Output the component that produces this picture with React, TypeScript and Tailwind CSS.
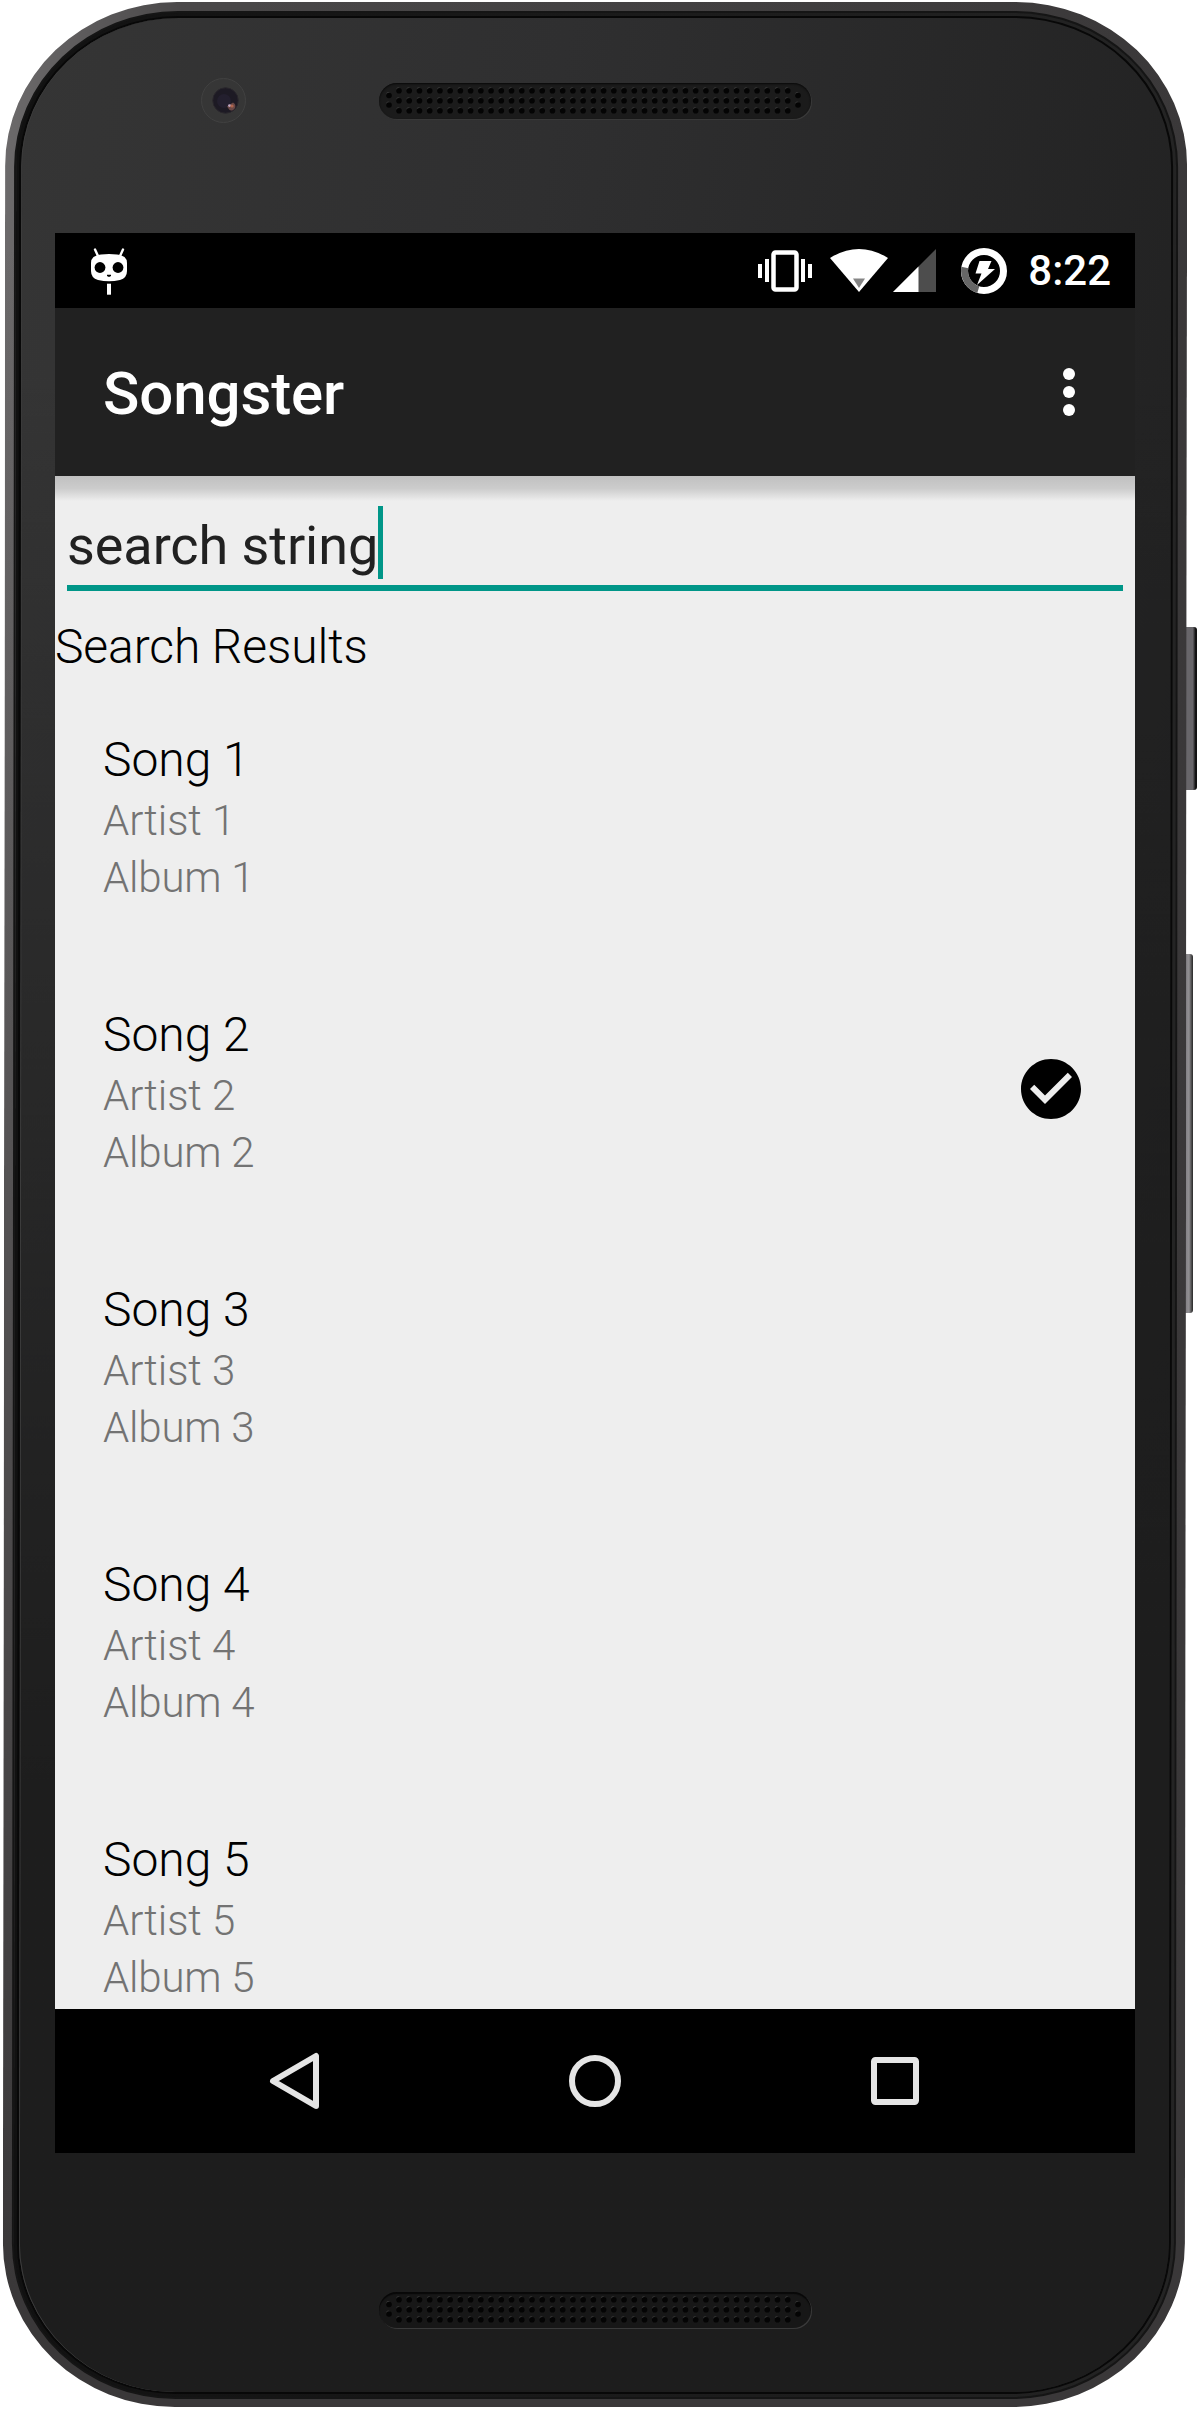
import React from "react";

const songs = [1, 2, 3, 4, 5];
const selectedSong = 2;
const columns = Array.from({ length: 39 }, (_, i) => 20 + i * 10.23);

function Hole({ x, y }: { x: number; y: number }) {
  return (
    <g>
      <circle cx={x - 0.9} cy={y - 1.6} r="1.8" fill="#3b3b3b" />
      <circle cx={x} cy={y} r="2.8" fill="#040404" />
    </g>
  );
}

function Speaker({ bottom = false }: { bottom?: boolean }) {
  return (
    <div
      className={
        bottom
          ? "h-9 w-[432px] rounded-full bg-[#171717] shadow-[inset_0_2px_1px_#080808,1px_1px_0_#3a3a3a]"
          : "h-9 w-[432px] rounded-full bg-[#1b1b1b] shadow-[inset_0_1px_2px_#080808,1px_1px_0_#393939]"
      }
    >
      <svg width="432" height="36" viewBox="0 0 432 36">
        {columns.map((x) => (
          <g key={x}>
            <Hole x={x} y={7.7} />
            <Hole x={x} y={17.7} />
            <Hole x={x} y={27.7} />
          </g>
        ))}
        <Hole x={10} y={12.5} />
        <Hole x={10} y={22} />
        <Hole x={419} y={12.5} />
        <Hole x={419} y={22} />
      </svg>
    </div>
  );
}

function Camera() {
  return (
    <div className="flex size-[45px] items-center justify-center rounded-full border border-[#414141] bg-[#363636]">
      <svg width="27" height="27" viewBox="0 0 27 27" className="ml-[3px]">
        <circle cx="13.5" cy="13.5" r="12.7" fill="#1d1a24" stroke="#29262c" />
        <circle cx="12" cy="14" r="7" fill="#231f2e" />
        <path d="M15 19.5 21 15.5a4 4 0 0 1-3.5 7.5z" fill="#6b4846" />
        <circle cx="17.5" cy="18.6" r="1.4" fill="#c4a9c4" />
        <circle cx="20" cy="19" r="1.6" fill="#b0654e" />
      </svg>
    </div>
  );
}

function StatusBar() {
  return (
    <div className="flex h-[75px] shrink-0 items-center bg-black pr-6 pl-9">
      <svg width="36" height="48" viewBox="0 0 36 48">
        <path d="M4 2.5 7 9M32 2.5 29 9" stroke="#fff" strokeWidth="2.4" strokeLinecap="round" />
        <path
          d="M10 7.6Q18 6.6 26 7.6Q36 8.6 36 16V24Q36 31 29 33Q18 35.6 7 33Q0 31 0 24V16Q0 8.6 10 7.6Z"
          fill="#fff"
        />
        <circle cx="9" cy="20.5" r="5.4" />
        <circle cx="27" cy="20.5" r="5.4" />
        <path d="M16 27.7h4v1l-1 1h-2l-1-1z" />
        <path d="M16 36.7h4v11h-4z" fill="#fff" />
      </svg>
      <svg width="54" height="42" viewBox="0 0 54 42" className="ml-auto">
        <rect x="15.5" y="2.5" width="23" height="37" rx="2" fill="none" stroke="#fff" strokeWidth="4.5" />
        <path d="M0 14h4v14H0zM7 9h4v23H7zM43 9h4v23h-4zM50 14h4v14h-4z" fill="#fff" />
      </svg>
      <svg width="58" height="43" viewBox="0 0 58 43" className="ml-[18px]">
        <path d="M0 9Q29-9 58 9L29 43Z" fill="#fff" />
        <path d="M23 29.5H35L29 39Z" fill="#858585" />
      </svg>
      <svg width="43" height="43" viewBox="0 0 43 43" className="ml-[5px]">
        <path d="M43 0V43H0Z" fill="#4d4d4d" />
        <path d="M25.5 17.5V43H0Z" fill="#fff" />
      </svg>
      <svg width="46" height="46" viewBox="0 0 46 46" className="ml-[25px]">
        <circle cx="23" cy="23" r="19.5" fill="none" stroke="#fff" strokeWidth="7" />
        <path d="M17.3 41.7A19.5 19.5 0 0 1 3.9 19.5" fill="none" stroke="#666" strokeWidth="7" />
        <path d="M18.5 13H30.5L27 21H34L16 37L20.5 25.5H14.5Z" fill="#fff" />
      </svg>
      <span className="ml-[21px] text-[42px] leading-[49px] font-medium text-white">8:22</span>
    </div>
  );
}

function AppBar() {
  return (
    <div className="flex h-[168px] shrink-0 items-center justify-between bg-[#212121] pr-[60px] pl-12 text-white">
      <h1 className="pt-1 text-[60px] leading-[70px] font-medium tracking-[-0.1px]">Songster</h1>
      <svg width="12" height="48" viewBox="0 0 12 48" fill="#fff">
        <circle cx="6" cy="6" r="6" />
        <circle cx="6" cy="24" r="6" />
        <circle cx="6" cy="42" r="6" />
      </svg>
    </div>
  );
}

function SongRow({ n }: { n: number }) {
  return (
    <li className="flex h-[275px] shrink-0 items-start justify-between pr-[54px] pl-12 font-light">
      <div className="pt-[51px]">
        <p className="text-[48px] leading-[64px] text-black">Song {n}</p>
        <p className="text-[42px] leading-[57px] tracking-[-0.06px] text-[#737373]">Artist {n}</p>
        <p className="text-[42px] leading-[57px] tracking-[-0.2px] text-[#737373]">Album {n}</p>
      </div>
      {n === selectedSong && (
        <svg width="60" height="60" viewBox="2 2 20 20" className="mt-[107px]">
          <path d="M12 2C6.48 2 2 6.48 2 12s4.48 10 10 10 10-4.48 10-10S17.52 2 12 2zm-2 15l-5-5 1.41-1.41L10 14.17l7.59-7.59L19 8l-9 9z" />
        </svg>
      )}
    </li>
  );
}

function NavBar() {
  return (
    <div className="flex h-36 shrink-0 items-center justify-center gap-60 bg-black">
      <svg width="60" height="60" viewBox="0 0 60 60" fill="none" stroke="#e5e5e5" strokeWidth="6" strokeLinejoin="round">
        <path d="M8 30 51 5V55Z" />
      </svg>
      <svg width="60" height="60" viewBox="0 0 60 60" fill="none" stroke="#e5e5e5" strokeWidth="6">
        <circle cx="30" cy="30" r="23" />
      </svg>
      <svg width="60" height="60" viewBox="0 0 60 60" fill="none" stroke="#e5e5e5" strokeWidth="6">
        <rect x="9" y="9" width="42" height="42" rx="1.5" />
      </svg>
    </div>
  );
}

function Screen() {
  return (
    <main className="flex h-[1920px] w-[1080px] shrink-0 flex-col overflow-hidden bg-[#eeeeee]">
      <StatusBar />
      <AppBar />
      <div className="flex min-h-0 flex-1 flex-col overflow-hidden">
        <div className="h-[25px] shrink-0 bg-linear-to-b from-[#c0c0c0] via-[#cccccc] via-50% to-[#eeeeee]" />
        <div className="mx-3 mt-[5px] flex h-[85px] shrink-0 items-start border-b-6 border-[#009688]">
          <span className="pt-2 text-[54px] leading-[63px] tracking-[-0.08px] whitespace-pre text-[#212121]">
            search string
          </span>
          <span className="h-[73px] w-[5px] bg-[#009688]" />
        </div>
        <h2 className="mt-7 h-[58px] shrink-0 text-[48px] leading-[56px] font-light tracking-[-0.1px] text-black">
          Search Results
        </h2>
        <ul className="flex flex-col">
          {songs.map((n) => (
            <SongRow key={n} n={n} />
          ))}
        </ul>
      </div>
      <NavBar />
    </main>
  );
}

function PhoneFrame() {
  return (
    <div className="absolute inset-0">
      <div className="absolute top-[627px] left-[1183px] h-[163px] w-[14px] rounded-r-[3px] bg-linear-to-r from-[#68666a] from-70% to-[#111] to-90%" />
      <div className="absolute top-[954px] left-[1183px] h-[359px] w-[10px] rounded-r-[3px] bg-linear-to-r from-[#77757a] via-[#929093] via-60% to-[#333] to-95%" />
      <div className="absolute top-[2px] left-[3.5px] h-[2405px] w-[1181.5px] -skew-x-[0.06deg] rounded-[172px/164px] bg-[linear-gradient(to_bottom,#3a383900_10%,#3a3839_95%),linear-gradient(to_right,#6c6a6b_0%,#4a4849_15%,#3a3839_100%)] p-[8.5px]">
        <div className="size-full rounded-[164px/156px] border-2 border-[#151515] bg-linear-to-r from-[#111111] to-[#242424] p-[3px]">
          <div className="size-full rounded-[159px/151px] border-2 border-[#080808] bg-[linear-gradient(100deg,#353535_0%,#2f2f30_35%,#1c1c1c_100%)]">
            <div className="size-full rounded-[157px/149px] border-l border-[#3c3c3c] bg-linear-to-b from-[#1d1d1d]/0 from-15% to-[#1d1d1d] to-75%" />
          </div>
        </div>
      </div>
    </div>
  );
}

export default function App() {
  return (
    <div className="relative h-[2409px] w-[1198px] overflow-hidden bg-white font-[Roboto,sans-serif]">
      <PhoneFrame />
      <div className="relative flex h-full flex-col pl-[55px]">
        <div className="flex h-[233px] shrink-0 items-start pt-[78px] pl-[146px]">
          <Camera />
          <div className="mt-[5px] ml-[133px]">
            <Speaker />
          </div>
        </div>
        <Screen />
        <div className="pt-[139px] pl-[324px]">
          <Speaker bottom />
        </div>
      </div>
    </div>
  );
}
